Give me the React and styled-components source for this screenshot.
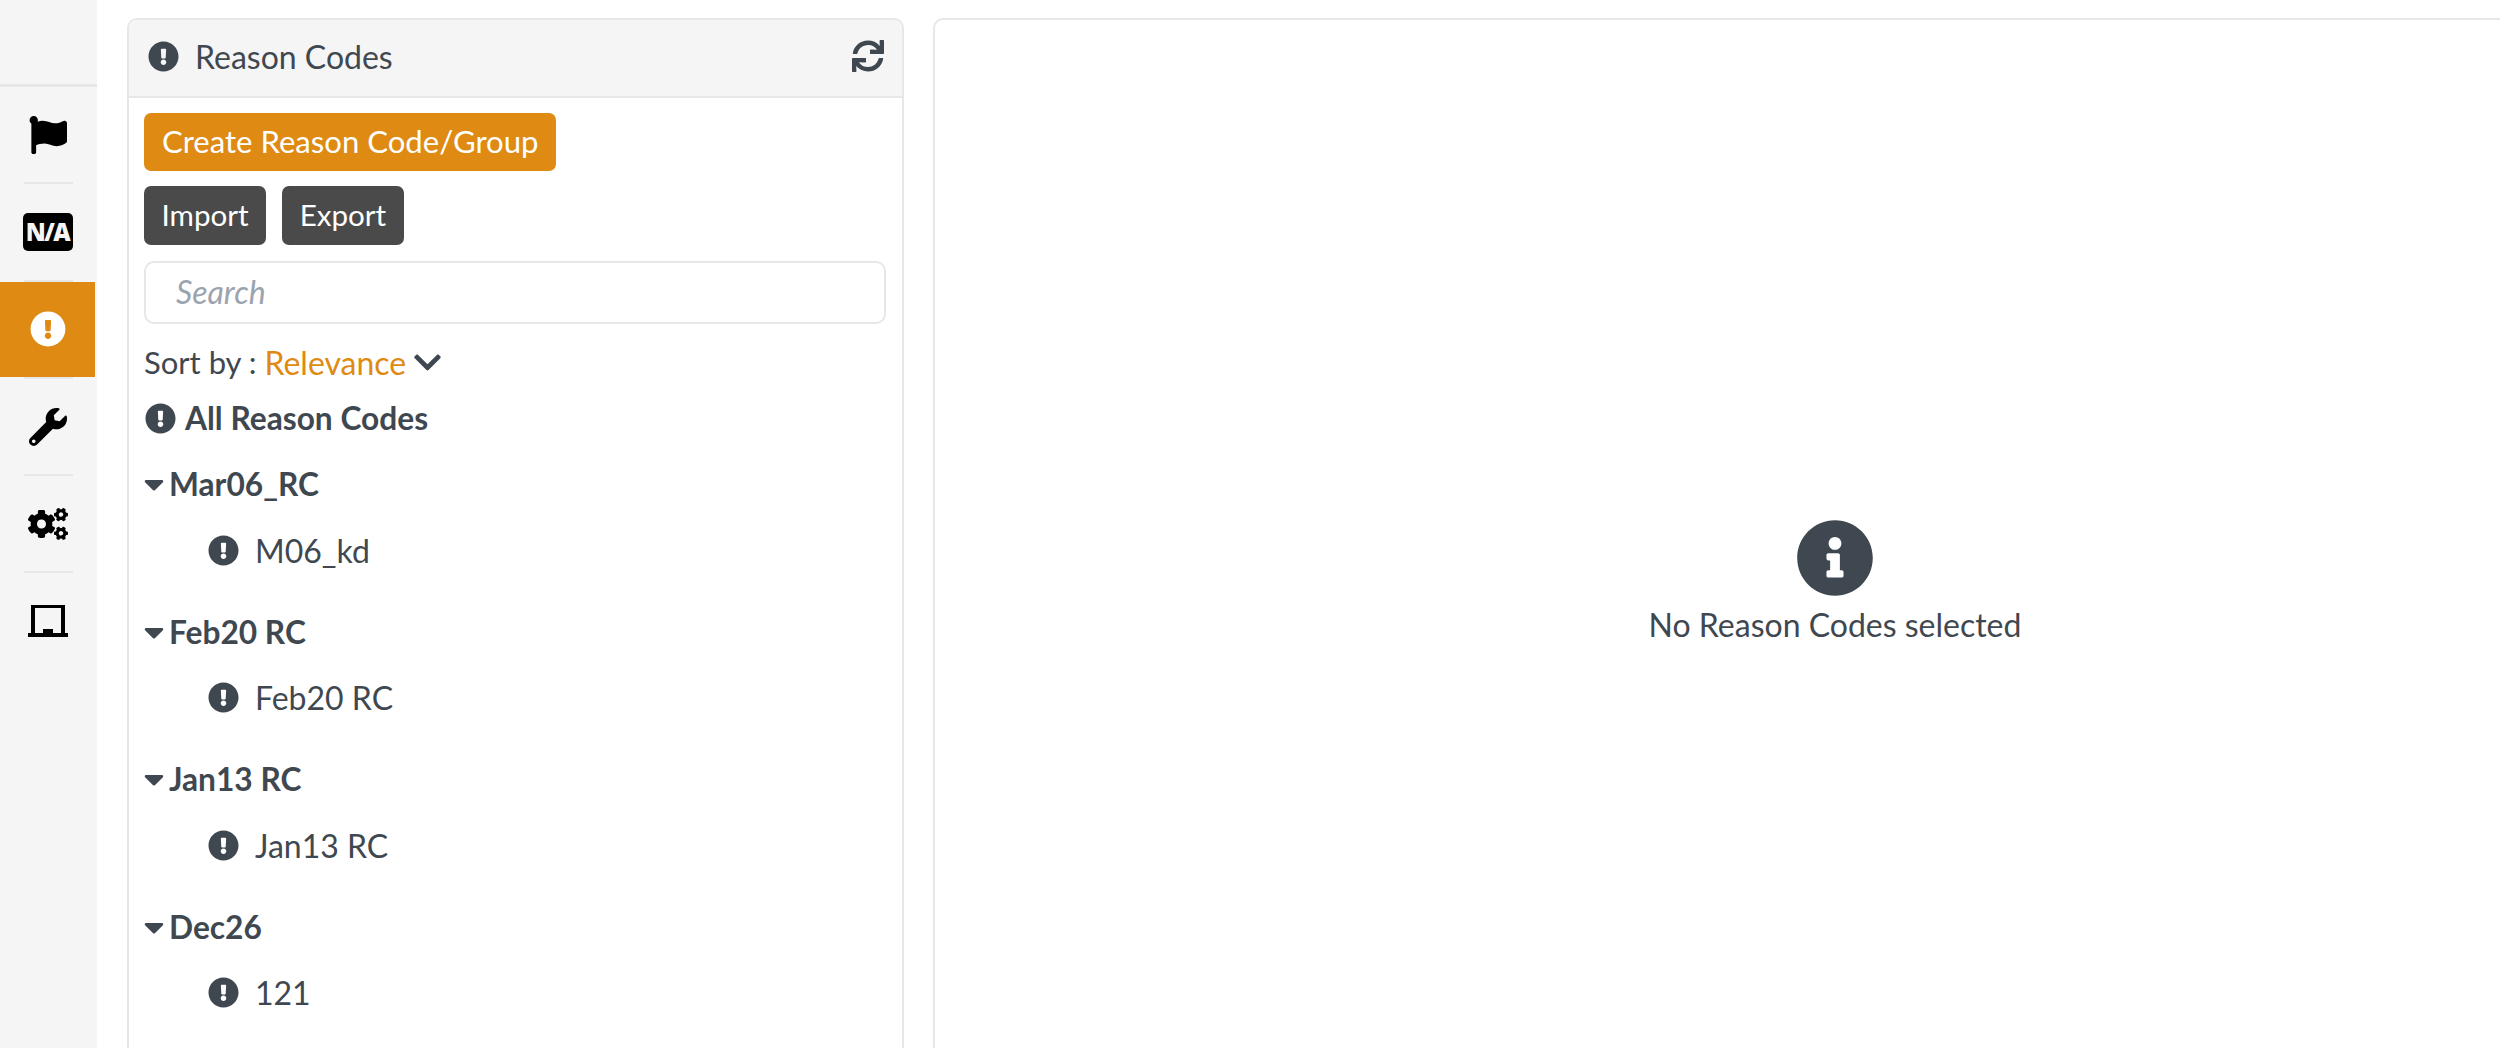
import React from 'react';
import styled, { createGlobalStyle } from 'styled-components';
import { FaFlag, FaExclamationCircle, FaWrench, FaCogs, FaSync, FaChevronDown, FaCaretDown, FaInfoCircle } from 'react-icons/fa';

const Global = createGlobalStyle`
  html, body { margin: 0; padding: 0; height: 1048px; overflow: hidden; background: #fff; }
  body { font-family: Lato, "Open Sans", sans-serif; color: #3f4850; }
`

const groups = [
  { name: 'Mar06_RC', item: 'M06_kd' },
  { name: 'Feb20 RC', item: 'Feb20 RC' },
  { name: 'Jan13 RC', item: 'Jan13 RC' },
  { name: 'Dec26', item: '121' },
]

function LaptopIcon() {
  return (
    <svg width="40" height="32" viewBox="0 0 40 32">
      <path d="M3 0h34v28h-4V3H7v25H3z M0 28h15v-4h10v4h15v4H0z" fill="#000" />
    </svg>
  )
}

function App() {
  return (
    <Page>
      <Global />
      <Sidebar>
        <SideTop />
        <SideItem><FaFlag size={38} /></SideItem>
        <SideItem><NaBadge>N/A</NaBadge></SideItem>
        <SideItem $active><FaExclamationCircle size={36} /></SideItem>
        <SideItem><FaWrench size={38} /></SideItem>
        <SideItem><FaCogs size={40} /></SideItem>
        <SideItem $last><LaptopIcon /></SideItem>
      </Sidebar>
      <Content>
        <ListPanel>
          <PanelHead>
            <HeadTitle><FaExclamationCircle size={31} />Reason Codes</HeadTitle>
            <FaSync size={32} />
          </PanelHead>
          <PanelBody>
            <ButtonRow>
              <Button $primary>Create Reason Code/Group</Button>
            </ButtonRow>
            <ButtonRow>
              <Button>Import</Button>
              <Button>Export</Button>
            </ButtonRow>
            <SearchBox placeholder="Search" readOnly />
            <SortRow>
              Sort by : <SortValue>Relevance</SortValue>
              <FaChevronDown size={31} />
            </SortRow>
            <AllRow><FaExclamationCircle size={31} />All Reason Codes</AllRow>
            {groups.map((g) => (
              <Group key={g.name}>
                <GroupHead><CaretIcon size={32} />{g.name}</GroupHead>
                <Item><FaExclamationCircle size={31} />{g.item}</Item>
              </Group>
            ))}
          </PanelBody>
        </ListPanel>
        <DetailPanel>
          <Empty>
            <FaInfoCircle size={78} />
            <EmptyText>No Reason Codes selected</EmptyText>
          </Empty>
        </DetailPanel>
      </Content>
    </Page>
  )
}

const Page = styled.div`
  display: flex;
  width: 2500px;
  height: 1048px;
  overflow: hidden;
`
const Sidebar = styled.div`
  flex: none;
  width: 97px;
  height: 1048px;
  background: #f5f5f5;
`
const SideTop = styled.div`
  height: 84px;
  border-bottom: 3px solid #e7e7e7;
`
const SideItem = styled.div`
  position: relative;
  display: flex;
  align-items: center;
  justify-content: center;
  width: 95px;
  height: 95.3px;
  margin-bottom: 2px;
  background: ${(p) => (p.$active ? '#de8a13' : 'transparent')};
  color: ${(p) => (p.$active ? '#fff' : '#000')};

  &::after {
    content: '';
    display: ${(p) => (p.$last ? 'none' : 'block')};
    position: absolute;
    left: 24px;
    right: 22px;
    bottom: -2px;
    height: 2px;
    background: #e7e7e7;
  }
`
const NaBadge = styled.div`
  display: flex;
  align-items: center;
  justify-content: center;
  width: 50px;
  height: 38px;
  border-radius: 5px;
  background: #000;
  color: #f5f5f5;
  font-family: "Open Sans", sans-serif;
  font-weight: 800;
  font-size: 24px;
  letter-spacing: -1.5px;
`
const Content = styled.div`
  flex: none;
  display: flex;
  align-items: flex-start;
  gap: 29px;
  padding: 18px 0 0 30px;
`
const ListPanel = styled.div`
  flex: none;
  box-sizing: border-box;
  width: 777px;
  height: 1200px;
  border: 2px solid #e7e7e7;
  border-radius: 10px;
`
const PanelHead = styled.div`
  display: flex;
  align-items: center;
  justify-content: space-between;
  box-sizing: border-box;
  height: 78px;
  padding: 0 18px 4px 19px;
  background: #f5f5f5;
  border-bottom: 2px solid #e7e7e7;
  border-radius: 8px 8px 0 0;
`
const HeadTitle = styled.div`
  display: flex;
  align-items: center;
  gap: 16px;
  font-size: 32px;
`
const PanelBody = styled.div`
  padding: 15px 15px 0 15px;
`
const ButtonRow = styled.div`
  display: flex;
  gap: 16px;
  margin-bottom: 15px;

  & + & {
    margin-bottom: 16px;
  }
`
const Button = styled.div`
  display: flex;
  align-items: center;
  box-sizing: border-box;
  height: ${(p) => (p.$primary ? '58px' : '59px')};
  padding: ${(p) => (p.$primary ? '0 18px 2px' : '0 17.5px 2px')};
  border-radius: 7px;
  background: ${(p) => (p.$primary ? '#de8a13' : '#4a4a4a')};
  color: #fff;
  font-size: ${(p) => (p.$primary ? '31.1px' : '29.6px')};
`
const SearchBox = styled.input`
  display: block;
  box-sizing: border-box;
  width: 742px;
  height: 63px;
  padding: 0 30px 2px;
  border: 2px solid #e7e7e7;
  border-radius: 10px;
  outline: none;
  font-family: inherit;
  font-size: 32px;
  font-style: italic;
  color: #3f4850;

  &::placeholder {
    color: #9ba3ae;
    opacity: 1;
  }
`
const SortRow = styled.div`
  display: flex;
  align-items: center;
  height: 48px;
  margin-top: 14px;
  font-size: 31px;
  white-space: pre;
`
const SortValue = styled.span`
  margin-right: 6px;
  font-size: 32px;
  color: #de8a13;
`
const AllRow = styled.div`
  display: flex;
  align-items: center;
  gap: 9px;
  height: 44px;
  margin-top: 10px;
  padding-left: 1px;
  font-size: 31.7px;
  font-weight: 700;
`
const Group = styled.div`
  padding-top: 11px;
  height: 136.5px;
`
const GroupHead = styled.div`
  display: flex;
  align-items: center;
  height: 66px;
  font-size: 31.7px;
  font-weight: 700;
`
const CaretIcon = styled(FaCaretDown)`
  margin-left: -6px;
  margin-right: -1px;
`
const Item = styled.div`
  display: flex;
  align-items: center;
  gap: 16px;
  height: 66px;
  padding-left: 64px;
  font-size: 32px;
`
const DetailPanel = styled.div`
  flex: none;
  display: flex;
  align-items: center;
  justify-content: center;
  box-sizing: border-box;
  width: 1804px;
  height: 1126px;
  border: 2px solid #e7e7e7;
  border-radius: 10px;
`
const Empty = styled.div`
  display: flex;
  flex-direction: column;
  align-items: center;
`
const EmptyText = styled.div`
  margin-top: 8px;
  font-size: 32px;
`

export default App
